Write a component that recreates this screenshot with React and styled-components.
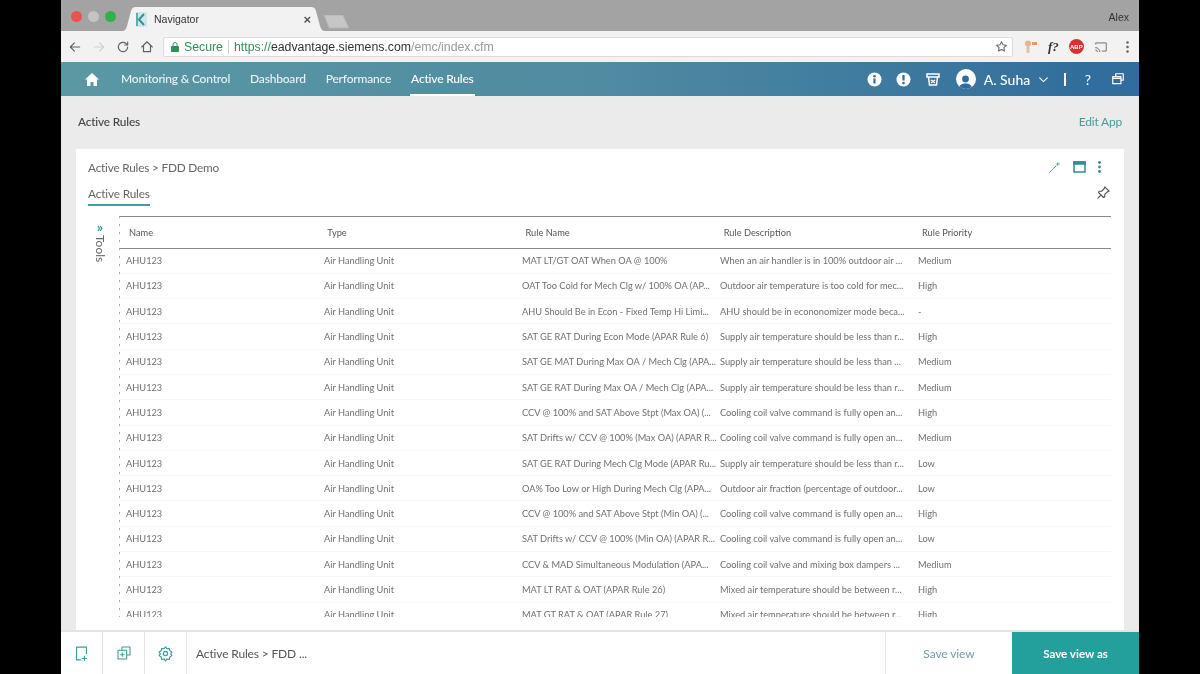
import React from "react";
import styled, { createGlobalStyle } from "styled-components";

const Global = createGlobalStyle`
  html, body { margin: 0; padding: 0; background: #000; }
  * { box-sizing: border-box; }
  body { font-family: Lato, "Open Sans", sans-serif; }
`;

const Stage = styled.div`
  width: 1200px; height: 674px; background: #000; display: flex; justify-content: center; overflow: hidden;
  padding-left: 1px;
`;
const Screen = styled.div`
  width: 1078px; height: 674px; display: flex; flex-direction: column; background: #ebebeb; margin-right: 1px;
  filter: blur(0.3px);
`;
const TitleBar = styled.div`
  height: 31px; flex: none; background: #a3a3a3; display: flex; align-items: flex-end; padding-left: 10px; position: relative;
`;
const Lights = styled.div`
  display: flex; gap: 6px; align-self: flex-start; margin-top: 10.500px;
`;
const Light = styled.span`
  width: 11px; height: 11px; border-radius: 50%; background: ${p => p.$c};
`;
const TabShape = styled.div`
  width: 203px; height: 24px; position: relative; display: flex; align-items: center;
  margin-left: 6px;
  padding-left: 14px;
  svg.bg { position: absolute; left: 0; top: 0; }
`;
const Favicon = styled.svg`
  position: relative; width: 11px; height: 15px; flex: none;
`;
const TabTitle = styled.span`
  position: relative; margin-left: 7px; font: 10.500px "Liberation Sans", sans-serif; color: #333; flex: 1;
`;
const TabClose = styled.span`
  position: relative; margin-right: 14px; color: #555; font: bold 13px "Liberation Sans", sans-serif;
`;
const NewTab = styled.svg`
  width: 30px; height: 14px; margin-bottom: 2px; margin-left: -3px;
`;
const UserName = styled.span`
  position: absolute; right: 10px; top: 11px; font: 10.500px "Liberation Sans", sans-serif; color: #333;
`;
const Toolbar = styled.div`
  height: 31px; flex: none; background: #f2f2f2; display: flex; align-items: center; padding: 0 8px 0 2px;
`;
const NavIcon = styled.span`
  width: ${p => p.$w || 24}px; display: flex; justify-content: center; color: ${p => p.$c || "#5f6368"}; flex: none;
`;
const Omnibox = styled.div`
  width: 850px; flex: none; height: 20px; margin: 0 0 0 4px; background: #fff; border: 1px solid #dcdcdc; border-radius: 2px;
  display: flex; align-items: center; padding: 0 4px 0 7px; font: 12.300px "Liberation Sans", sans-serif;
`;
const Secure = styled.span`
  color: #2f8f5b; margin-left: 5px; padding-right: 5px; border-right: 1px solid #cfcfcf; line-height: 14px;
`;
const Url = styled.span`
  margin-left: 5px; color: #2f8f5b;
  b { font-weight: normal; color: #333; }
  i { font-style: normal; color: #999; }
`;
const Star = styled.span`
  margin-left: auto; display: flex; color: #666;
`;
const Extensions = styled.div`
  flex: 1; display: flex; align-items: center; gap: 10px; padding-left: 11px;
`;
const FQ = styled.span`
  font: italic bold 13px "Liberation Serif", serif; color: #333; margin-left: 1px;
`;
const Abp = styled.span`
  width: 15px; height: 15px; border-radius: 50%; background: #d9312f; color: #fff;
  font: bold 6px "Liberation Sans", sans-serif; display: flex; align-items: center; justify-content: center;
`;
const Kebab = styled.svg`
  margin-left: 8px;
`;
const NavBar = styled.nav`
  height: 34px; flex: none; background: linear-gradient(90deg, #5b98a4 0%, #4f8ba1 50%, #2f6b9c 100%);
  display: flex; align-items: center; padding: 0 14px 0 24px; color: #fff;
`;
const NavLink = styled.a`
  font-size: 12px; letter-spacing: -0.2px; font-weight: 500; color: ${p => p.$active ? "#fff" : "#eaf3f5"}; margin-right: 18px; height: 34px;
  display: flex; align-items: center; padding: 0 1px; border-bottom: 2px solid ${p => p.$active ? "#fff" : "transparent"};
`;
const NavGap = styled.span`
  width: 21px; flex: none;
`;
const NavRight = styled.div`
  margin-left: auto; display: flex; align-items: center; color: #fff;
`;
const StatusIcon = styled.svg`
  margin-left: ${p => p.$ml || 0}px; margin-right: ${p => p.$mr || 0}px; flex: none;
`;
const Avatar = styled.span`
  width: 20px; height: 20px; border-radius: 50%; background: #fff; color: #2f6b9c;
  display: flex; align-items: flex-end; justify-content: center; overflow: hidden;
`;
const UserLabel = styled.span`
  font-size: 14px; margin: 0 7px 0 8px; font-weight: 500;
`;
const Sep = styled.span`
  width: 1.500px; height: 13px; background: #fff; margin: 0 19px 0 14px;
`;
const Help = styled.span`
  font-size: 14px; margin-right: 20px;
`;
const Main = styled.main`
  flex: 1; min-height: 0; padding: 0 15px; display: flex; flex-direction: column; overflow: hidden; background: #ebebeb;
`;
const PageHead = styled.div`
  height: 53px; flex: none; display: flex; align-items: center; justify-content: space-between; padding: 0 2px 3px;
`;
const PageTitle = styled.h1`
  margin: 0; font-size: 11.800px; letter-spacing: -0.150px; font-weight: 500; color: #444;
`;
const EditApp = styled.a`
  font-size: 12px; letter-spacing: -0.200px; color: #4a9a9c;
`;
const Card = styled.section`
  flex: 1; min-height: 0; background: #fff; padding: 0 13px 13px 12px; display: flex; flex-direction: column; overflow: hidden;
`;
const CardHead = styled.div`
  height: 35px; flex: none; display: flex; align-items: center; justify-content: space-between; padding-top: 1px;
`;
const Crumb = styled.div`
  font-size: 11.800px; letter-spacing: -0.200px; color: #666;
`;
const CardTools = styled.div`
  display: flex; gap: 12px; align-items: center; color: #3d9a9a; margin-right: 10px;
`;
const Tabs = styled.div`
  height: 22px; flex: none; display: flex; justify-content: space-between; align-items: flex-start;
`;
const TabItem = styled.div`
  font-size: 11.800px; letter-spacing: -0.150px; color: #666; height: 22px; padding-top: 2px; border-bottom: 2px solid #3f9f9f;
`;
const PinBox = styled.span`
  color: #555; display: flex; margin-top: 1px;
`;
const Body = styled.div`
  flex: 1; min-height: 0; display: flex; margin-top: 10px;
`;
const ToolsRail = styled.div`
  width: 32px; flex: none; display: flex; flex-direction: column; align-items: center; padding: 6px 8px 0 0;
  background: linear-gradient(#aaa 2px, transparent 2px) right top / 1px 8px repeat-y;
`;
const Chev = styled.span`
  font-size: 14px; line-height: 10px; color: #2b9a9a; font-weight: 700;
`;
const ToolsLabel = styled.span`
  writing-mode: vertical-rl; font-size: 12px; color: #666; margin-top: 3px;
`;
const TableWrap = styled.div`
  flex: 1; min-width: 0; overflow: hidden;
`;
const Head = styled.div`
  display: grid; grid-template-columns: repeat(5, 198.250px); height: 32.500px; align-items: center; padding-left: 9px;
  border-top: 1.500px solid #8a8a8a; border-bottom: 1.500px solid #8a8a8a;
`;
const HeadCell = styled.div`
  font-size: 9.250px; color: #555;
`;
const Row = styled.div`
  display: grid; grid-template-columns: repeat(5, 198px); height: 25.300px; align-items: center; padding-left: 6px;
  border-bottom: 1px solid #f7f7f7;
`;
const Cell = styled.div`
  font-size: 9.250px; color: #707070; white-space: nowrap; overflow: hidden;
`;
const Footer = styled.footer`
  height: 44px; flex: none; background: #fff; display: flex; align-items: stretch; border-top: 2px solid #e4e4e4;
`;
const FootIcon = styled.div`
  width: 42px; flex: none; display: flex; align-items: center; justify-content: center; color: #3d9a9a;
  border-right: 1px solid #e4e4e4;
`;
const FootTitle = styled.div`
  flex: 1; display: flex; align-items: center; padding-left: 9px; font-size: 12px; letter-spacing: -0.150px; color: #555;
`;
const SaveView = styled.button`
  width: 127px; border: 0; border-left: 1px solid #e4e4e4; background: #fff; color: #6f9fa3; font: 12px Lato, sans-serif; letter-spacing: -0.100px;
`;
const SaveAs = styled.button`
  width: 127px; border: 0; background: #23a09c; color: #fff; font: 700 11.600px Lato, sans-serif;
`;

const rows = [
  ["MAT LT/GT OAT When OA @ 100%", "When an air handler is in 100% outdoor air ...", "Medium"],
  ["OAT Too Cold for Mech Clg w/ 100% OA (AP...", "Outdoor air temperature is too cold for mec...", "High"],
  ["AHU Should Be in Econ - Fixed Temp Hi Limi...", "AHU should be in econonomizer mode beca...", "-"],
  ["SAT GE RAT During Econ Mode (APAR Rule 6)", "Supply air temperature should be less than r...", "High"],
  ["SAT GE MAT During Max OA / Mech Clg (APA...", "Supply air temperature should be less than ...", "Medium"],
  ["SAT GE RAT During Max OA / Mech Clg (APA...", "Supply air temperature should be less than r...", "Medium"],
  ["CCV @ 100% and SAT Above Stpt (Max OA) (...", "Cooling coil valve command is fully open an...", "High"],
  ["SAT Drifts w/ CCV @ 100% (Max OA) (APAR R...", "Cooling coil valve command is fully open an...", "Medium"],
  ["SAT GE RAT During Mech Clg Mode (APAR Ru...", "Supply air temperature should be less than r...", "Low"],
  ["OA% Too Low or High During Mech Clg (APA...", "Outdoor air fraction (percentage of outdoor...", "Low"],
  ["CCV @ 100% and SAT Above Stpt (Min OA) (...", "Cooling coil valve command is fully open an...", "High"],
  ["SAT Drifts w/ CCV @ 100% (Min OA) (APAR R...", "Cooling coil valve command is fully open an...", "Low"],
  ["CCV & MAD Simultaneous Modulation (APA...", "Cooling coil valve and mixing box dampers ...", "Medium"],
  ["MAT LT RAT & OAT (APAR Rule 26)", "Mixed air temperature should be between r...", "High"],
  ["MAT GT RAT & OAT (APAR Rule 27)", "Mixed air temperature should be between r...", "High"],
];

const S = ({ w = 14, h = 14, vb = "0 0 24 24", sw = 2, children }) => (
  <svg width={w} height={h} viewBox={vb} fill="none" stroke="currentColor" strokeWidth={sw} strokeLinecap="round" strokeLinejoin="round">{children}</svg>
);

export default function App() {
  return (
    <Stage>
      <Global />
      <Screen>
        <TitleBar>
          <Lights>
            <Light $c="#e8534f" /><Light $c="#c4c4c4" /><Light $c="#2fb24a" />
          </Lights>
          <TabShape>
            <svg className="bg" width="203" height="24" viewBox="0 0 203 24"><path d="M0 24 C3 24 4 22 5 19 L9 4 C10 1 11 0 14 0 L189 0 C192 0 193 1 194 4 L198 19 C199 22 200 24 203 24 Z" fill="#f2f2f2" /></svg>
            <Favicon viewBox="0 0 11 15"><rect width="11" height="15" fill="#cfe6e6" /><path d="M8 2 L3 7.500 L8 13" stroke="#3a8f92" strokeWidth="2" fill="none" /><path d="M1 1V14" stroke="#3a9a9c" strokeWidth="1.500" /></Favicon>
            <TabTitle>Navigator</TabTitle>
            <TabClose>×</TabClose>
          </TabShape>
          <NewTab viewBox="0 0 30 14"><path d="M2 0 H21 L27 13 H7 Z" fill="#c6c6c6" stroke="#b2b2b2" /></NewTab>
          <UserName>Alex</UserName>
        </TitleBar>
        <Toolbar>
          <NavIcon><S><path d="M20 12H4M11 5l-7 7 7 7" /></S></NavIcon>
          <NavIcon $c="#d0d0d0"><S><path d="M4 12h16M13 5l7 7-7 7" /></S></NavIcon>
          <NavIcon><S><path d="M20 12a8 8 0 1 1-2.500-5.800L20 8.500M20 3.500v5h-5" /></S></NavIcon>
          <NavIcon><S><path d="M3 12 12 3l9 9M6 10v10h12V10" /></S></NavIcon>
          <Omnibox>
            <svg width="8" height="10" viewBox="0 0 8 10"><rect y="4" width="8" height="6" rx="1" fill="#2f8f5b" /><path d="M2 4V2.500a2 2 0 0 1 4 0V4" fill="none" stroke="#2f8f5b" /></svg>
            <Secure>Secure</Secure>
            <Url>https://<b>eadvantage.siemens.com</b><i>/emc/index.cfm</i></Url>
            <Star><S w={13} h={13}><path d="m12 3 2.800 5.800 6.200.9-4.500 4.400 1 6.200L12 17.400 6.500 20.300l1-6.200L3 9.700l6.200-.9z" /></S></Star>
          </Omnibox>
          <Extensions>
            <svg width="13" height="13" viewBox="0 0 13 13"><circle cx="4" cy="3.500" r="3" fill="#e8b48c" /><rect x="2.500" y="6" width="3" height="7" fill="#e0c4a8" /><rect x="8" y="2" width="5" height="3" fill="#e89a60" /></svg>
            <FQ>f?</FQ>
            <Abp>ABP</Abp>
            <NavIcon $w={14}><S w={14} h={14} sw={1.5}><path d="M3 7V5h18v14h-7M3 17a3 3 0 0 1 3 3M3 13a7 7 0 0 1 7 7" /></S></NavIcon>
            <Kebab width="3" height="12" viewBox="0 0 3 12"><circle cx="1.500" cy="1.500" r="1.300" fill="#666" /><circle cx="1.500" cy="6" r="1.300" fill="#666" /><circle cx="1.500" cy="10.500" r="1.300" fill="#666" /></Kebab>
          </Extensions>
        </Toolbar>
        <NavBar>
          <svg width="14" height="13" viewBox="0 0 14 13" fill="#fff"><path d="M7 0 14 6.500h-2V13H8.500V9h-3v4H2V6.500H0z" /></svg>
          <NavGap />
          <NavLink>Monitoring &amp; Control</NavLink>
          <NavLink>Dashboard</NavLink>
          <NavLink>Performance</NavLink>
          <NavLink $active>Active Rules</NavLink>
          <NavRight>
            <StatusIcon width="15" height="15" viewBox="0 0 15 15"><circle cx="7.500" cy="7.500" r="7" fill="#fff" /><rect x="6.400" y="6.500" width="2.200" height="5" fill="#2f6b9c" /><circle cx="7.500" cy="4.300" r="1.300" fill="#2f6b9c" /></StatusIcon>
            <StatusIcon $ml={14} width="15" height="15" viewBox="0 0 15 15"><circle cx="7.500" cy="7.500" r="7" fill="#fff" /><rect x="6.400" y="3" width="2.200" height="5.500" fill="#2f6b9c" /><circle cx="7.500" cy="11" r="1.300" fill="#2f6b9c" /></StatusIcon>
            <StatusIcon $ml={15} $mr={16} width="14" height="14" viewBox="0 0 14 14" fill="none" stroke="#fff" strokeWidth="1.500"><path d="M1 2h12v3H1zM2.500 5l1 8h7l1-8M5 8l4 3M9 8l-4 3" /></StatusIcon>
            <Avatar><svg width="13" height="15" viewBox="0 0 13 15" fill="currentColor"><circle cx="6.500" cy="5" r="3.400" /><path d="M0 15c0-4 3-5.500 6.500-5.500S13 11 13 15z" /></svg></Avatar>
            <UserLabel>A. Suha</UserLabel>
            <S w={13} h={13}><path d="m5 9 7 7 7-7" /></S>
            <Sep />
            <Help>?</Help>
            <S w={14} h={14}><path d="M8 7V3h13v11h-4M3 8h14v12H3zM3 11h14" /></S>
          </NavRight>
        </NavBar>
        <Main>
          <PageHead>
            <PageTitle>Active Rules</PageTitle>
            <EditApp>Edit App</EditApp>
          </PageHead>
          <Card>
            <CardHead>
              <Crumb>Active Rules &gt; FDD Demo</Crumb>
              <CardTools>
                <S w={13} h={13} sw={1.600}><path d="M3 21 15 9M18 3v5M21 5.500h-5" /></S>
                <svg width="13" height="12" viewBox="0 0 13 12" fill="none" stroke="#2f8f8f" strokeWidth="1.500"><rect x="1" y="1" width="11" height="10" /><rect x="1" y="1" width="11" height="2" fill="#2f8f8f" /></svg>
                <svg width="3" height="12" viewBox="0 0 3 12" fill="#2f8f8f"><circle cx="1.500" cy="1.500" r="1.400" /><circle cx="1.500" cy="6" r="1.400" /><circle cx="1.500" cy="10.500" r="1.400" /></svg>
              </CardTools>
            </CardHead>
            <Tabs>
              <TabItem>Active Rules</TabItem>
              <PinBox><S w={15} h={15} sw={1.800}><path d="m14 3 7 7-3 1-4 4 0 4-2 1-8-8 1-2 4 0 4-4zM8 16l-5 5" /></S></PinBox>
            </Tabs>
            <Body>
              <ToolsRail>
                <Chev>»</Chev>
                <ToolsLabel>Tools</ToolsLabel>
              </ToolsRail>
              <TableWrap>
                <Head>
                  <HeadCell>Name</HeadCell>
                  <HeadCell>Type</HeadCell>
                  <HeadCell>Rule Name</HeadCell>
                  <HeadCell>Rule Description</HeadCell>
                  <HeadCell>Rule Priority</HeadCell>
                </Head>
                {rows.map((r, i) => (
                  <Row key={i}>
                    <Cell>AHU123</Cell>
                    <Cell>Air Handling Unit</Cell>
                    <Cell>{r[0]}</Cell>
                    <Cell>{r[1]}</Cell>
                    <Cell>{r[2]}</Cell>
                  </Row>
                ))}
              </TableWrap>
            </Body>
          </Card>
        </Main>
        <Footer>
          <FootIcon>
            <S w={17} h={17} sw={1.600}><path d="M11 21H5V3h14v9M16 16v6M13 19h6" /></S>
          </FootIcon>
          <FootIcon>
            <S w={16} h={16} sw={1.600}><path d="M9 8V3h12v12h-5M3 8h13v13H3zM9.500 12v5M7 14.500h5" /></S>
          </FootIcon>
          <FootIcon>
            <S w={17} h={17} sw={1.600}><circle cx="12" cy="12" r="3" /><path d="M12 2.500l2 2.800 3.400-.6.7 3.400 2.900 1.900-1.700 2.500 1.700 2.500-2.900 1.900-.7 3.400-3.400-.6-2 2.800-2-2.800-3.400.6-.7-3.400L3 15l1.700-2.500L3 10l2.900-1.900.7-3.400 3.400.6z" /></S>
          </FootIcon>
          <FootTitle>Active Rules &gt; FDD ...</FootTitle>
          <SaveView>Save view</SaveView>
          <SaveAs>Save view as</SaveAs>
        </Footer>
      </Screen>
    </Stage>
  );
}
